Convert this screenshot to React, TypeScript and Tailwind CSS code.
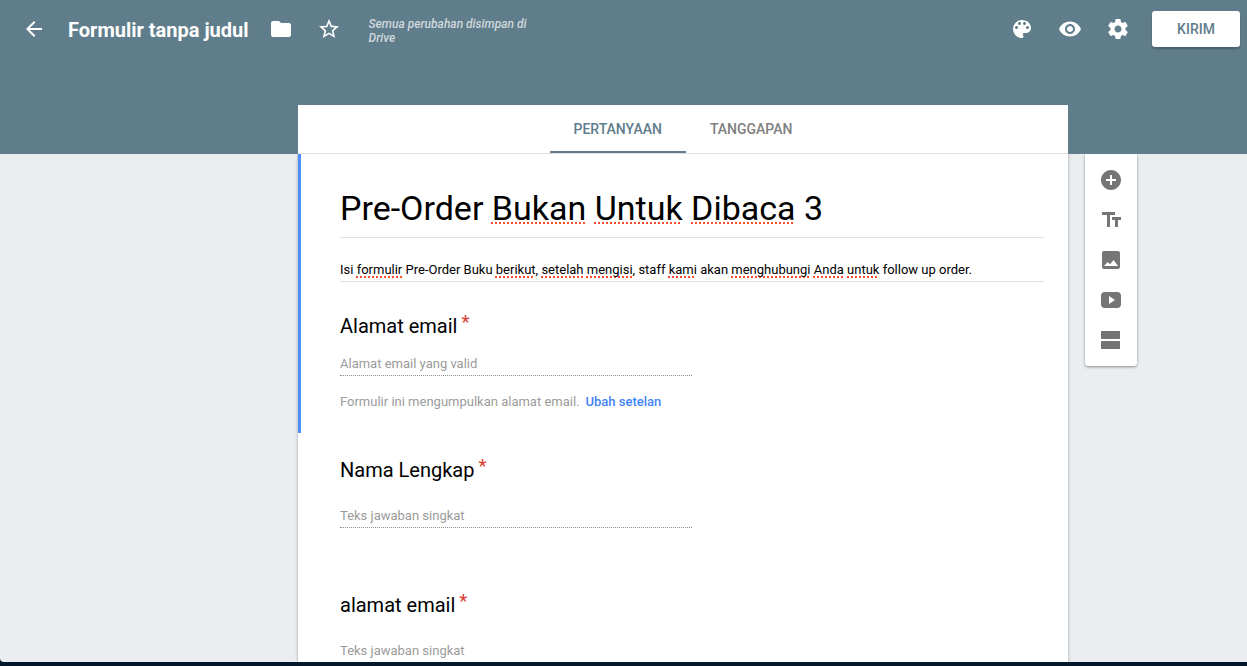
import React from "react";

const ICONS = {
  back: "M20 11H7.83l5.59-5.59L12 4l-8 8 8 8 1.41-1.41L7.83 13H20v-2z",
  folder:
    "M10 4H4c-1.1 0-1.99.9-1.99 2L2 18c0 1.1.9 2 2 2h16c1.1 0 2-.9 2-2V8c0-1.1-.9-2-2-2h-8l-2-2z",
  star: "M22 9.24l-7.19-.62L12 2 9.19 8.63 2 9.24l5.46 4.73L5.82 21 12 17.27 18.18 21l-1.63-7.03L22 9.24zM12 15.4l-3.76 2.27 1-4.28-3.32-2.88 4.38-.38L12 6.1l1.71 4.04 4.38.38-3.32 2.88 1 4.28L12 15.4z",
  palette:
    "M12 3c-4.97 0-9 4.03-9 9s4.03 9 9 9c.83 0 1.5-.67 1.5-1.5 0-.39-.15-.74-.39-1.01-.23-.26-.38-.61-.38-.99 0-.83.67-1.5 1.5-1.5H16c2.76 0 5-2.24 5-5 0-4.42-4.03-8-9-8zm-5.5 9c-.83 0-1.5-.67-1.5-1.5S5.67 9 6.5 9 8 9.67 8 10.5 7.33 12 6.5 12zm3-4C8.67 8 8 7.33 8 6.5S8.67 5 9.5 5s1.5.67 1.5 1.5S10.33 8 9.5 8zm5 0c-.83 0-1.5-.67-1.5-1.5S13.67 5 14.5 5s1.5.67 1.5 1.5S15.33 8 14.5 8zm3 4c-.83 0-1.5-.67-1.5-1.5S16.67 9 17.5 9s1.5.67 1.5 1.5-.67 1.5-1.5 1.5z",
  eye: "M12 4.5C7 4.5 2.73 7.61 1 12c1.73 4.39 6 7.5 11 7.5s9.27-3.11 11-7.5c-1.73-4.39-6-7.5-11-7.5zM12 17c-2.76 0-5-2.24-5-5s2.24-5 5-5 5 2.24 5 5-2.24 5-5 5zm0-8c-1.66 0-3 1.34-3 3s1.34 3 3 3 3-1.34 3-3-1.34-3-3-3z",
  settings:
    "M19.43 12.98c.04-.32.07-.64.07-.98s-.03-.66-.07-.98l2.11-1.65c.19-.15.24-.42.12-.64l-2-3.46c-.12-.22-.39-.3-.61-.22l-2.49 1c-.52-.4-1.08-.73-1.69-.98l-.38-2.65C14.46 2.18 14.25 2 14 2h-4c-.25 0-.46.18-.49.42l-.38 2.65c-.61.25-1.17.59-1.69.98l-2.49-1c-.23-.09-.49 0-.61.22l-2 3.46c-.13.22-.07.49.12.64l2.11 1.65c-.04.32-.07.65-.07.98s.03.66.07.98l-2.11 1.65c-.19.15-.24.42-.12.64l2 3.46c.12.22.39.3.61.22l2.49-1c.52.4 1.08.73 1.69.98l.38 2.65c.03.24.24.42.49.42h4c.25 0 .46-.18.49-.42l.38-2.65c.61-.25 1.17-.59 1.69-.98l2.49 1c.23.09.49 0 .61-.22l2-3.46c.12-.22.07-.49-.12-.64l-2.11-1.65zM12 15.5c-1.93 0-3.5-1.57-3.5-3.5s1.57-3.5 3.5-3.5 3.5 1.57 3.5 3.5-1.57 3.5-3.5 3.5z",
  add: "M12 2C6.48 2 2 6.48 2 12s4.48 10 10 10 10-4.48 10-10S17.52 2 12 2zm5 11h-4v4h-2v-4H7v-2h4V7h2v4h4v2z",
  text: "M3 4v3h5v12h3V7h5V4H3zm19 5h-9v3h3v7h3v-7h3V9z",
  image:
    "M21 19V5c0-1.1-.9-2-2-2H5c-1.1 0-2 .9-2 2v14c0 1.1.9 2 2 2h14c1.1 0 2-.9 2-2zM8.7 14l2.4 2.2L14.5 12l4.5 6H5l3.7-4z",
  video:
    "M18.5 4h-13C3.6 4 2 5.6 2 7.5v9C2 18.4 3.6 20 5.5 20h13c1.9 0 3.5-1.6 3.5-3.5v-9C22 5.6 20.4 4 18.5 4zM10 16V8l6 4-6 4z",
  section:
    "M20.5 3h-18c-.3 0-.5.2-.5.5v7c0 .3.2.5.5.5h18c.3 0 .5-.2.5-.5v-7c0-.3-.2-.5-.5-.5zm0 10h-18c-.3 0-.5.2-.5.5v7c0 .3.2.5.5.5h18c.3 0 .5-.2.5-.5v-7c0-.3-.2-.5-.5-.5z",
};

function IconButton({ name, label }: { name: keyof typeof ICONS; label: string }) {
  return (
    <button type="button" aria-label={label} className="size-6 shrink-0">
      <svg viewBox="0 0 24 24" className="size-6 fill-current" aria-hidden="true">
        <path d={ICONS[name]} />
      </svg>
    </button>
  );
}

function Misspelled({ children }: { children: React.ReactNode }) {
  return (
    <span className="underline decoration-[#ff4b2b] decoration-dotted decoration-2 underline-offset-2 [text-decoration-skip-ink:none]">
      {children}
    </span>
  );
}

function QuestionLabel({ id, text }: { id: string; text: string }) {
  return (
    <label htmlFor={id} className="flex gap-1 text-xl leading-7 text-black">
      {text}
      <span className="-mt-1 text-lg leading-7 font-medium text-[#db4437]">*</span>
    </label>
  );
}

function AnswerInput({ id, placeholder }: { id: string; placeholder: string }) {
  return (
    <input
      id={id}
      type="text"
      placeholder={placeholder}
      className="block h-[22px] w-1/2 border-b border-dotted border-[#8c8c8c] pb-0.5 text-[13px] leading-5 outline-none placeholder:text-[#9b9b9b]"
    />
  );
}

function Question({ id, text }: { id: string; text: string }) {
  return (
    <section className="pt-[23px] pr-6 pb-10 pl-[42px]">
      <QuestionLabel id={id} text={text} />
      <div className="mt-[22px]">
        <AnswerInput id={id} placeholder="Teks jawaban singkat" />
      </div>
    </section>
  );
}

export default function App() {
  return (
    <div className="h-screen bg-[#03182b] pb-1 font-['Roboto',sans-serif]">
      <div className="flex h-full flex-col overflow-hidden rounded-bl bg-[#eaeef1]">
        <header className="relative shrink-0 bg-[#607d8b] text-white">
          <div className="flex h-[58px] items-center pr-[7px] pl-[22px]">
            <IconButton name="back" label="Kembali" />
            <h1 className="ml-[22px] pt-0.5 text-xl font-bold whitespace-nowrap">
              Formulir tanpa judul
            </h1>
            <div className="ml-5 flex gap-6">
              <IconButton name="folder" label="Pindahkan ke folder" />
              <IconButton name="star" label="Beri bintang" />
            </div>
            <p className="ml-7 w-[180px] pt-1 text-xs leading-[14px] font-medium text-[#cfd8dc] italic">
              Semua perubahan disimpan di Drive
            </p>
            <div className="ml-auto flex items-center gap-6">
              <IconButton name="palette" label="Palet warna" />
              <IconButton name="eye" label="Pratinjau" />
              <IconButton name="settings" label="Setelan" />
            </div>
            <button
              type="button"
              className="ml-[22px] h-9 w-[88px] rounded-[3px] bg-white text-sm font-medium text-[#607d8b] shadow-[0_2px_2px_rgba(0,0,0,0.25)]"
            >
              KIRIM
            </button>
          </div>
          <div className="flex justify-center pt-[47px] pl-[188px]">
            <nav className="mr-[69px] flex w-[770px] justify-center border-b border-[#e0e0e0] bg-white text-sm font-medium">
              <a
                href="#pertanyaan"
                className="flex h-12 items-center border-b-2 border-[#607d8b] px-6 pt-0.5 text-[#607d8b]"
              >
                PERTANYAAN
              </a>
              <a
                href="#tanggapan"
                className="flex h-12 items-center border-b-2 border-transparent px-6 pt-0.5 text-[#808080]"
              >
                TANGGAPAN
              </a>
            </nav>
          </div>
        </header>

        <main className="flex min-h-0 flex-1 justify-center gap-[17px] pl-[188px]">
          <form className="w-[770px] overflow-hidden bg-white shadow-[0_0_3px_rgba(0,0,0,0.35)]">
            <section className="border-l-[3px] border-[#4d90fe] pt-[30px] pr-6 pb-[21px] pl-[39px]">
              <h2
                contentEditable
                suppressContentEditableWarning
                spellCheck={false}
                className="border-b border-[#e0e0e0] pb-[5px] text-[34px] leading-[48px] text-black outline-none"
              >
                Pre-Order <Misspelled>Bukan</Misspelled> <Misspelled>Untuk</Misspelled>{" "}
                <Misspelled>Dibaca</Misspelled> 3
              </h2>
              <p
                contentEditable
                suppressContentEditableWarning
                spellCheck={false}
                className="mt-6 border-b border-[#e0e0e0] pb-[3px] text-[13px] leading-4 text-black outline-none"
              >
                Isi <Misspelled>formulir</Misspelled> Pre-Order Buku <Misspelled>berikut</Misspelled>,{" "}
                <Misspelled>setelah</Misspelled> <Misspelled>mengisi</Misspelled>, staff{" "}
                <Misspelled>kami</Misspelled> akan <Misspelled>menghubungi</Misspelled>{" "}
                <Misspelled>Anda</Misspelled> <Misspelled>untuk</Misspelled> follow up order.
              </p>
              <div className="mt-[30px]">
                <QuestionLabel id="email" text="Alamat email" />
              </div>
              <div className="mt-[14px]">
                <AnswerInput id="email" placeholder="Alamat email yang valid" />
              </div>
              <p className="mt-4 text-[13px] leading-5 text-[#9b9b9b]">
                Formulir ini mengumpulkan alamat email.
                <a href="#setelan" className="ml-1.5 font-medium text-[#4285f4]">
                  Ubah setelan
                </a>
              </p>
            </section>
            <Question id="nama" text="Nama Lengkap" />
            <Question id="alamat" text="alamat email" />
          </form>

          <aside className="flex w-[52px] flex-col items-center gap-4 self-start rounded-b-[3px] bg-white pt-[14px] pb-[14px] text-[#757575] shadow-[0_1px_3px_rgba(0,0,0,0.4)]">
            <IconButton name="add" label="Tambahkan pertanyaan" />
            <IconButton name="text" label="Tambahkan judul dan deskripsi" />
            <IconButton name="image" label="Tambahkan gambar" />
            <IconButton name="video" label="Tambahkan video" />
            <IconButton name="section" label="Tambahkan bagian" />
          </aside>
        </main>
      </div>
    </div>
  );
}
